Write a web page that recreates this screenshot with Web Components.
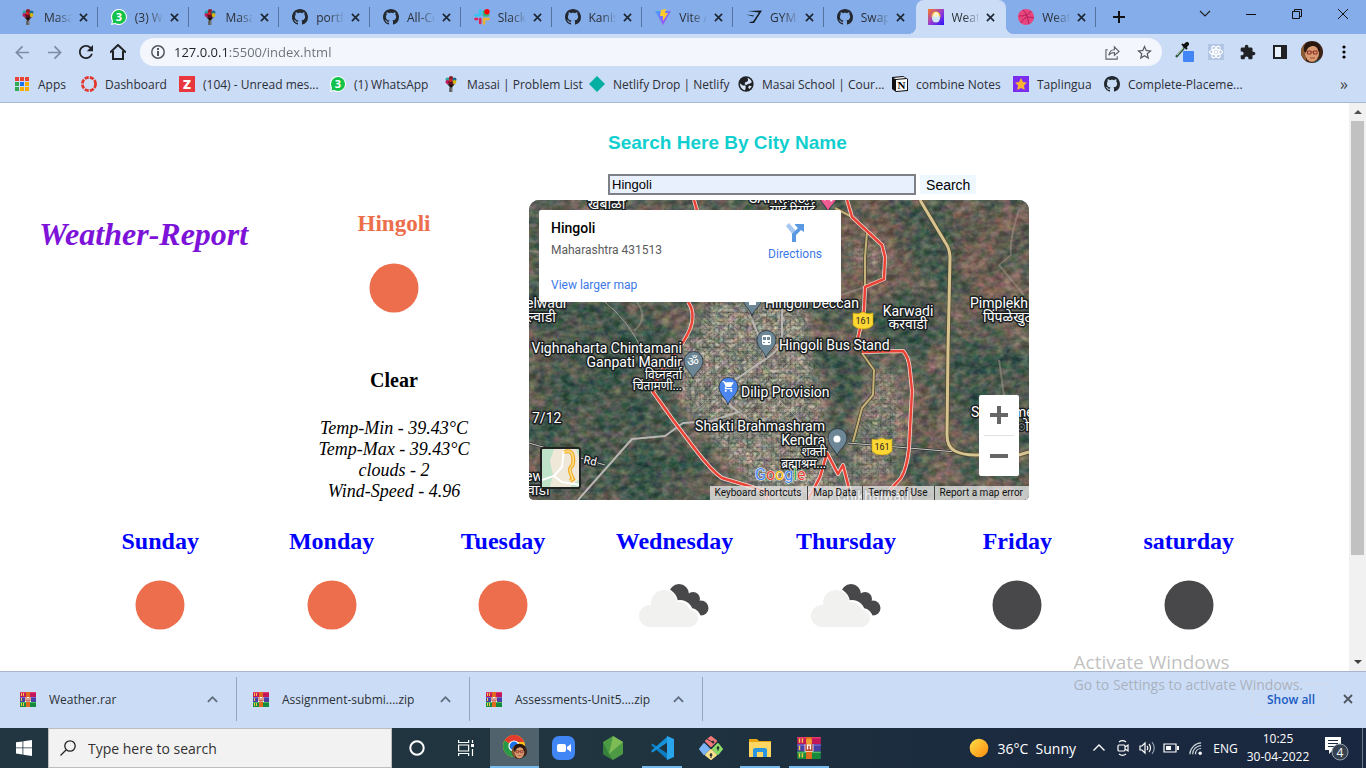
<!DOCTYPE html>
<html lang="en">
<head>
<meta charset="utf-8">
<title>Weather Report</title>
<style>
html,body{margin:0;height:100%}
body{font-family:"Open Sans","Noto Sans",sans-serif;font-size:12px;color:#2b2f36;background:#fff;overflow:hidden}
</style>
</head>
<body>
<desktop-shell></desktop-shell>
<script>
const GH='<path fill="#24292f" d="M8 0C3.58 0 0 3.58 0 8c0 3.54 2.29 6.53 5.47 7.59.4.07.55-.17.55-.38 0-.19-.01-.82-.01-1.49-2.01.37-2.53-.49-2.69-.94-.09-.23-.48-.94-.82-1.13-.28-.15-.68-.52-.01-.53.63-.01 1.08.58 1.23.82.72 1.21 1.87.87 2.33.66.07-.52.28-.87.51-1.07-1.78-.2-3.64-.89-3.64-3.95 0-.87.31-1.59.82-2.15-.08-.2-.36-1.02.08-2.12 0 0 .67-.21 2.2.82.64-.18 1.32-.27 2-.27.68 0 1.36.09 2 .27 1.53-1.04 2.2-.82 2.2-.82.44 1.1.16 1.92.08 2.12.51.56.82 1.27.82 2.15 0 3.07-1.87 3.75-3.65 3.95.29.25.54.73.54 1.48 0 1.07-.01 1.93-.01 2.2 0 .21.15.46.55.38A8.013 8.013 0 0016 8c0-4.42-3.58-8-8-8z"/>';
const FACE='<clipPath id="f"><circle cx="12" cy="12" r="11"/></clipPath><g clip-path="url(#f)"><path fill="#3d2417" d="M0 0h24v24H0z"/><path fill="#8a5a33" d="M0 0h6v24H0z"/><ellipse cx="12" cy="13" rx="7" ry="9" fill="#d99a72"/><path fill="#2a1710" d="M4 11C3 4 7 1 13 2c6 0 8 4 7 10l-2-1c0-3-2-5-6-5-4 1-5 3-6 7z"/><path fill="none" stroke="#8c2d22" d="M7.500 11h3.500v3H7.500zm6 0H17v3h-3.500zM11 12h2.500"/><path stroke="#a34b3a" d="M10 18h5"/><path fill="#2b86a5" d="M12 24l8-5 4 1v4z"/></g>';
const RAR='<path fill="#c2185b" d="M0 0h16v5H0z"/><path fill="#e5396b" d="M0 0h16v1H0z"/><path fill="#4a3fa5" d="M0 5h16v5H0z"/><path fill="#7468cf" d="M0 5h16v1H0z"/><path fill="#168a3c" d="M0 10h16v5H0z"/><path fill="#4cb85f" d="M0 10h16v1H0z"/><path fill="#f6c945" d="M1 1h1v3H1zM3 1h1v3H3zM1 6h1v3H1zM1 11h1v3H1zM3 11h1v3H3z"/><path fill="#e06b1f" d="M6 0h4v15H6z"/><path fill="#fff" d="M5 5h6v5H5z"/><path fill="none" stroke="#b3402a" d="M6 5v4h4V5M8 6v3"/>';
const ICONS={
balloon:['0 0 16 16','<path fill="#777" d="M4 8h8l-2.500 3v5h-3v-5z"/><path stroke="#444" d="M5 8l3 4 3-4M7 12v4"/><circle cx="4.500" cy="3.500" r="2" fill="#2ba8a0"/><circle cx="8" cy="2.300" r="2.200" fill="#8f1d2c"/><circle cx="11.500" cy="3.500" r="2" fill="#1a6b8c"/><circle cx="4.500" cy="6" r="2" fill="#c2185b"/><circle cx="8" cy="6.500" r="2.600" fill="#5c1020"/><circle cx="11.500" cy="6" r="1.900" fill="#d8b400"/><circle cx="7.500" cy="4.500" r="1.500" fill="#d22"/>'],
wa:['0 0 16 16','<path fill="#fff" d="M8 0a8 8 0 1 1-4 15l-4 1 1-4A8 8 0 0 1 8 0z"/><circle cx="8" cy="8" r="7" fill="#12c24a"/><path fill="#12c24a" d="M1.500 14.500l1-5 4 4z"/><text x="8" y="12" text-anchor="middle" font-size="11" font-weight="700" fill="#fff" font-family="Open Sans">3</text>'],
github:['0 0 16 16',GH],
slack:['0 0 16 16','<g stroke-width="2.600" stroke-linecap="round" fill="none"><path stroke="#36c5f0" d="M6.200 1.500v4M1.500 6.200h4"/><path stroke="#2eb67d" d="M10 2.500v3.500M10 6.200h4"/><path stroke="#e01e5a" d="M6.200 10v4M1.500 10h1.500"/><path stroke="#ecb22e" d="M10 10v4.500M10 10h4.500"/></g><circle cx="13" cy="2.700" r="2.700" fill="#f00"/>'],
vite:['0 0 16 16','<defs><linearGradient id="g" x2="1" y2="1"><stop stop-color="#41a5ff"/><stop offset="1" stop-color="#bd34fe"/></linearGradient></defs><path fill="url(#g)" d="M0 2l16 0-8 14z"/><path fill="#ffcb2b" d="M6 1l5-1-1 4h3l-5 8 0-5H5z"/>'],
gym:['0 0 16 16','<path fill="#101820" d="M2 2l14-.5L8 14H3l1.500-1.200 2.500-.2 6-9zM0 5.500l8 1-1 1z"/>'],
weather:['0 0 16 16','<defs><linearGradient id="g" y2="1" x2="1"><stop stop-color="#ff7a1a"/><stop offset=".5" stop-color="#9a3fd0"/><stop offset="1" stop-color="#2a12ff"/></linearGradient></defs><path fill="url(#g)" d="M0 0h16v16H0z"/><circle cx="8" cy="7" r="4.500" fill="#ffb52e"/><ellipse cx="8" cy="9" rx="4" ry="4.500" fill="#cfe8f8"/><circle cx="8" cy="5.500" r="2.500" fill="#fff3c8"/>'],
dribbble:['0 0 16 16','<circle cx="8" cy="8" r="8" fill="#e8457f"/><path fill="none" stroke="#b01e56" d="M5 1c4 4 5 9 6 14M1 7c5 0 10-1 12-5M3 14c3-6 7-7 13-5"/>'],
apps:['0 0 16 16','<path fill="#ea4335" d="M1 1h4v4H1zM6 1h4v4H6zM11 1h4v4h-4z"/><path fill="#34a853" d="M1 6h4v4H1zM1 11h4v4H1z"/><path fill="#1a73e8" d="M6 6h4v4H6z"/><path fill="#fbab00" d="M11 6h4v4h-4zM6 11h4v4H6zM11 11h4v4h-4z"/><path stroke="#cbdcf6" d="M0 5.500h16M0 10.500h16M5.500 0v16M10.500 0v16"/>'],
canvas:['0 0 16 16','<circle cx="8" cy="8" r="6.500" fill="none" stroke="#e4372c" stroke-width="3" stroke-dasharray="4 1.105"/><circle cx="8" cy="8" r="5.200" fill="#cbdcf6"/>'],
zed:['0 0 16 16','<path fill="#e8383d" d="M0 0h16v16H0z"/><text x="8" y="13" text-anchor="middle" font-size="13" font-weight="800" fill="#fff" font-family="Open Sans">Z</text>'],
diamond:['0 0 16 16','<path fill="#05b0a2" d="M8 0l8 8-8 8-8-8z"/>'],
globe:['1 1 22 22','<circle cx="12" cy="12" r="10.500" fill="#202124"/><path fill="#d8e4f8" d="M3.500 11l4 3h4v4l-1 2.500C7 20 3.500 16 3.500 11zM14 3.500c3 1 5 3 6 6l-3 2h-2l-2 2-3-1 1-3 3-1 1-2zM16 14l4 1-3 4-2-2z"/>'],
notion:['0 0 16 16','<path fill="#111" d="M0 1l11-1 5 3v12l-12 1-4-3z"/><path fill="#fff" d="M4 4l11-1v11L4 15zM1 2l10-1 3 1L4 3z"/><text x="9.500" y="13" text-anchor="middle" font-size="11" font-weight="700" fill="#000" font-family="Liberation Serif">N</text>'],
tap:['0 0 16 16','<path fill="#7a2cf0" d="M0 0h16v16H0z"/><path fill="#f9b233" d="M8 2l2 4 4 .5-3 3 .8 4.500L8 12l-3.800 2 .8-4.500-3-3L6 6z"/>'],
x:['0 0 10 10','<path stroke="currentColor" stroke-width="1.800" d="M1 1l8 8M9 1l-8 8"/>'],
xt:['0 0 10 10','<path stroke="#111" d="M0 0l10 10M10 0L0 10"/>'],
plus:['0 0 12 12','<path stroke="#111" stroke-width="2" d="M6 0v12M0 6h12"/>'],
chev:['0 0 12 12','<path fill="none" stroke="#222" stroke-width="1.200" d="M1 3l5 5 5-5"/>'],
up:['0 0 12 12','<path fill="none" stroke="currentColor" stroke-width="2" d="M1 8.500l5-5 5 5"/>'],
upt:['0 0 12 12','<path fill="none" stroke="currentColor" stroke-width="1.400" d="M.5 8.500L6 3l5.500 5.500"/>'],
min:['0 0 10 10','<path stroke="#111" d="M0 5.500h10"/>'],
restore:['0 0 10 10','<path fill="none" stroke="#111" d="M.5 2.500h7v7h-7zM2.500 2V.5h7v7H8"/>'],
back:['0 0 16 16','<path fill="none" stroke="#7d8ba5" stroke-width="1.800" d="M15 8H2M8 1.500L1.500 8 8 14.500"/>'],
fwd:['0 0 16 16','<path fill="none" stroke="#7d8ba5" stroke-width="1.800" d="M1 8h13M8 1.500L14.500 8 8 14.500"/>'],
reload:['4 4 16 16','<path fill="#1f2125" d="M17.650 6.350C16.200 4.900 14.210 4 12 4c-4.420 0-7.990 3.580-7.990 8s3.570 8 7.990 8c3.730 0 6.840-2.550 7.730-6h-2.080c-.82 2.330-3.040 4-5.650 4-3.310 0-6-2.690-6-6s2.690-6 6-6c1.660 0 3.140.69 4.220 1.780L13 11h7V4l-2.350 2.350z"/>'],
home:['0 0 16 16','<path fill="none" stroke="#1f2125" stroke-width="2" d="M0 8.500L8 1l8 7.500M3 7v8h10V7"/>'],
info:['0 0 14 14','<circle cx="7" cy="7" r="6.200" fill="none" stroke="#54585e" stroke-width="1.500"/><path fill="#54585e" d="M6 3h2v2H6zM6 6h2v5H6z"/>'],
share:['0 0 16 16','<path fill="none" stroke="#5f6368" stroke-width="1.200" d="M3 5H1v10h12v-3M4 11c1-5 4-6 6-6V2l5 5-5 4V8c-2 0-4 0-6 3z"/>'],
star:['2 2 20 20','<path fill="#54585e" d="M22 9.240l-7.190-.62L12 2 9.190 8.630 2 9.240l5.460 4.730L5.820 21 12 17.270 18.180 21l-1.630-7.030L22 9.240zM12 15.400l-3.760 2.270 1-4.280-3.320-2.880 4.380-.38L12 6.100l1.710 4.040 4.380.38-3.320 2.880 1 4.280L12 15.400z"/>'],
dropper:['0 0 20 20','<path stroke="#2f5a3e" stroke-width="2.400" d="M2 15l8-9"/><path stroke="#cfe3d8" d="M3 13l6-7"/><path stroke="#111" stroke-width="4" stroke-linecap="round" d="M11 4l2-2"/><path stroke="#111" stroke-width="2" d="M8 2l5 5"/><rect x="9" y="9" width="11" height="11" rx="1" fill="#4285f4"/>'],
react:['0 0 16 16','<path fill="#b3c5e4" d="M0 0h16v16H0z"/><g fill="none" stroke="#fff" stroke-width="1.200"><ellipse cx="8" cy="8" rx="6.500" ry="2.500"/><ellipse cx="8" cy="8" rx="6.500" ry="2.500" transform="rotate(60 8 8)"/><ellipse cx="8" cy="8" rx="6.500" ry="2.500" transform="rotate(120 8 8)"/></g><circle cx="8" cy="8" r="1.500" fill="#fff"/>'],
puzzle:['1 0 23 23','<path fill="#1f2125" d="M20.500 11H19V7c0-1.100-.9-2-2-2h-4V3.500C13 2.120 11.880 1 10.500 1S8 2.120 8 3.500V5H4c-1.100 0-1.990.9-1.990 2v3.800H3.500c1.490 0 2.700 1.210 2.700 2.700s-1.210 2.700-2.700 2.700H2V20c0 1.100.9 2 2 2h3.800v-1.500c0-1.490 1.210-2.700 2.700-2.700 1.490 0 2.700 1.210 2.700 2.700V22H17c1.100 0 2-.9 2-2v-4h1.500c1.380 0 2.500-1.120 2.500-2.500S21.880 11 20.500 11z"/>'],
panel:['0 0 14 14','<path fill="#1f2125" d="M0 0h14v14H0z"/><path fill="#e8f0fc" d="M2 2h6v10H2z"/>'],
face:['0 0 24 24',FACE],
dots:['0 0 4 16','<circle cx="2" cy="3" r="1.600"/><circle cx="2" cy="8" r="1.600"/><circle cx="2" cy="13" r="1.600"/>'],
rar:['0 0 16 15',RAR],
sunny:['0 0 100 100','<circle cx="50" cy="50" r="24.500" fill="#ec6e4c"/>'],
dark:['0 0 100 100','<circle cx="50" cy="50" r="24.500" fill="#48484a"/>'],
cloud:['0 0 100 100','<g fill="#48484a"><circle cx="55" cy="39" r="10"/><circle cx="69" cy="44" r="7"/><circle cx="77" cy="53" r="7.500"/><path d="M55 46l15-6 6 20-12-4z"/></g><g fill="#fff"><circle cx="39" cy="48" r="15"/><circle cx="56" cy="58" r="13"/><circle cx="66" cy="64" r="11"/></g><g fill="#f1f1ef"><circle cx="26" cy="61" r="11"/><circle cx="40" cy="48" r="13"/><circle cx="55" cy="58" r="11"/><circle cx="65" cy="63" r="9"/><path d="M26 57h39v15H26z"/></g>'],
win:['0 0 16 16','<path fill="#fff" d="M0 2.300L6.500 1.400v6.100H0zM7.300 1.300L16 0v7.500H7.300zM0 8.300h6.500v6.200L0 13.600zM7.300 8.300H16V16l-8.700-1.300z"/>'],
mag:['0 0 16 16','<circle cx="10" cy="6" r="5.200" fill="none" stroke="#222" stroke-width="1.300"/><path stroke="#222" stroke-width="1.300" d="M6 10l-5.500 5.500"/>'],
cortana:['0 0 16 16','<circle cx="8" cy="8" r="6.700" fill="none" stroke="#fff" stroke-width="2"/>'],
tasks:['0 0 16 16','<path fill="none" stroke="#fff" stroke-width="1.200" d="M.6 0v2.500h10V0M.6 5h10v6H.6zM.6 16v-2.500h10V16M14.500 0v3M14.500 9v7"/><path fill="#fff" d="M13 4h3v3h-3z"/>'],
chrome:['0 0 26 26','<circle cx="12" cy="12" r="11" fill="#fbc116"/><path fill="#e33b2e" d="M12 12L2.500 6.500a11 11 0 0 1 19 0L22 8H12z"/><path fill="#279847" d="M2.500 6.500A11 11 0 0 0 12 23l4-8z"/><circle cx="12" cy="12" r="5.600" fill="#fff"/><circle cx="12" cy="12" r="4.400" fill="#1a73e8"/><g transform="translate(9 9) scale(.7)">'+FACE+'</g>'],
zoomus:['0 0 24 24','<rect width="23" height="24" x="0" rx="7" fill="#4087f5"/><rect x="5" y="8" width="9" height="8" rx="2" fill="#fff"/><path fill="#fff" d="M15 11l4-3v8l-4-3z"/>'],
node:['0 0 24 24','<path fill="#4d9a45" d="M12 0l10 6v12l-10 6-10-6V6z"/><path fill="#7dbb56" d="M12 0l10 6-14 12z"/><path fill="#37803b" d="M2 6l6 12 4 6-10-6z"/>'],
vscode:['0 0 24 24','<path fill="#0c7dc3" d="M18 24L1 9l1.500-1.500L18 18z"/><path fill="#1591da" d="M18 0L1 15l1.500 1.500L18 6z"/><path fill="#28a5ec" d="M17 0l7 3v18l-7 3z"/>'],
git:['0 0 24 24','<g stroke-linejoin="round" stroke-width="2"><path fill="#f3787a" stroke="#f3787a" d="M12 1l5 4-5 5-5-5z"/><path fill="#7cb4f8" stroke="#7cb4f8" d="M5 8l5 5-5 5-4-5z"/><path fill="#8bdc67" stroke="#8bdc67" d="M19 8l4 5-4 5-5-5z"/><path fill="#f7e08a" stroke="#f7e08a" d="M12 14l5 5-5 4-5-4z"/></g><g stroke="#2b3036" fill="#2b3036"><path d="M8 3l7 4M12 17v5M19 10v5"/><circle cx="14" cy="6" r="1"/><circle cx="12" cy="19" r="1"/><circle cx="19" cy="12" r="1"/></g>'],
folder:['0 0 24 24','<path fill="#e7a60f" d="M1 3h8l2 2h12v4H1z"/><path fill="#ffd664" d="M1 6h22v15H1z"/><path fill="#2c95df" d="M5 21v-8l2-1h10l2 1v8h-4v-5H9v5z"/>'],
rarbig:['0 0 16 15',RAR+'<circle cx="8" cy="3" r="2" fill="#f0a02c"/>'],
sun:['0 0 20 20','<defs><linearGradient id="g" x2="1" y2="1"><stop stop-color="#ffe04a"/><stop offset="1" stop-color="#ff8a0c"/></linearGradient></defs><circle cx="10" cy="10" r="9.300" fill="url(#g)"/>'],
meet:['0 0 16 16','<g fill="none" stroke="#fff" stroke-width="1.200"><rect x="3" y="5" width="7" height="6" rx="1"/><path d="M10 7l3-2v6l-3-2M4 2c2-1.500 5-1.500 7 0M4 14c2 1.500 5 1.500 7 0"/></g>'],
vol:['0 0 16 16','<g fill="none" stroke="#fff" stroke-width="1.200"><path d="M1 6h2l3-3v10l-3-3H1zM8 6c1 1 1 3 0 4M10 4c2 2 2 6 0 8"/><path stroke="#93a3ae" d="M13 2c3 4 3 8 0 12"/></g>'],
batt:['0 0 16 16','<path fill="none" stroke="#fff" stroke-width="1.200" d="M1 4h12v8H1z"/><path fill="#fff" d="M3 6h5v4H3zM14 6h2v4h-2z"/>'],
wifi:['0 0 16 16','<g fill="none" stroke="#cfd6db" stroke-width="1.300"><path d="M2 14C2 8 8 2 14 2M5 14c0-5 4-9 9-9M8 14c0-4 3-6 6-6"/></g><circle cx="13" cy="13" r="1.800" fill="#fff"/>'],
note:['0 0 30 28','<path fill="#fff" d="M2 3h16v13h-8l-4 4v-4H2z"/><path stroke="#1c2b3e" d="M5 6.500h10M5 9.500h10M5 12.500h7"/><circle cx="17" cy="18" r="8" fill="#36424f" stroke="#93a0aa"/><text x="17" y="23" text-anchor="middle" font-size="12" fill="#fff" font-family="Open Sans">4</text>'],
tri:['0 0 8 4','<path fill="#505050" d="M0 4l4-4 4 4z"/>'],
trid:['0 0 8 4','<path fill="#404040" d="M0 0l4 4 4-4z"/>'],
dir:['0 0 20 20','<path fill="#a6c8f2" d="M1 3l3-3 7 8-3 4z"/><path fill="#5899e2" d="M7 19v-8l6-6-3-3V1h9v8l-3-2-5 5v7z"/>'],
};
function define(tag,html){
  customElements.define(tag,class extends HTMLElement{
    connectedCallback(){
      if(this.shadowRoot)return;
      const root=this.attachShadow({mode:'open'});
      const t=document.createElement('template');
      t.innerHTML='<style>*{box-sizing:border-box}button{font:inherit;color:inherit;border:0;background:none;padding:0;margin:0}a{color:inherit;text-decoration:none}</style>'+(typeof html==='function'?html(this):html);
      root.append(t.content.cloneNode(true));
    }
  });
}
/* <ui-icon name size h> draws one glyph from the set */
define('ui-icon',el=>{
  const [box,body]=ICONS[el.getAttribute('name')],s=el.getAttribute('size')||16,h=el.getAttribute('h')||s;
  return `<style>:host{display:inline-flex;flex:none}svg{display:block}text{line-height:1}</style><svg width="${s}" height="${h}" viewBox="${box}" aria-hidden="true">${body}</svg>`;
});
const ic=(n,s,h)=>`<ui-icon name="${n}" size="${s||16}"${h?` h="${h}"`:''}></ui-icon>`;

define('browser-tab',el=>`<style>
:host{display:flex;flex:1 1 0;min-width:0;height:34px;align-items:center;padding:0 10px 0 12px;gap:8px;position:relative;border-right:1px solid transparent;background:linear-gradient(#52749f,#52749f) right center/1px 20px no-repeat}
:host([plain]){background:none}
:host([active]){background:#cbdcf6;border-radius:8px 8px 0 0}
:host([active])::before,:host([active])::after{content:"";position:absolute;bottom:0;width:8px;height:8px}
:host([active])::before{left:-8px;background:radial-gradient(circle at 0 0,transparent 8px,#cbdcf6 8px)}
:host([active])::after{right:-9px;background:radial-gradient(circle at 100% 0,transparent 8px,#cbdcf6 8px)}
.t{flex:1;min-width:0;overflow:hidden;white-space:nowrap;text-align:left;mask-image:linear-gradient(90deg,#000 12px,transparent 29px)}
.c{display:flex;color:#1d2733}
</style>${ic(el.getAttribute('icon'))}<button class="t"><slot></slot></button><button class="c" aria-label="Close tab">${ic('x',9)}</button>`);

const tabs=[['balloon','Masai'],['wa','(3) W'],['balloon','Masai'],['github','portf'],['github','All-Co'],['slack','Slack'],['github','Kanis'],['vite','Vite A'],['gym','GYM'],['github','Swap','plain'],['weather','Weat','active'],['dribbble','Weat']];
define('tab-strip',()=>`<style>
:host{display:flex;background:#85ade9;padding-left:8px;height:34px}
.tabs{display:flex;flex:1;min-width:0}
.add{width:44px;display:grid;place-items:center}
.win{display:flex;margin-left:41px;height:28px}
.win button{width:46px;display:grid;place-items:center}
</style><div class="tabs">${tabs.map(t=>`<browser-tab icon="${t[0]}" ${t[2]||''}>${t[1]}</browser-tab>`).join('')}</div>
<button class="add" aria-label="New tab">${ic('plus',12)}</button>
<div class="win"><button aria-label="Search tabs">${ic('chev',12)}</button><button aria-label="Minimise">${ic('min',10)}</button><button aria-label="Restore">${ic('restore',10)}</button><button aria-label="Close">${ic('xt',10)}</button></div>`);

define('tool-bar',`<style>
:host{display:flex;align-items:center;height:36px;padding:0 6px;background:#cbdcf6}
button{width:32px;height:32px;display:grid;place-items:center;flex:none}
.box{flex:1;display:flex;align-items:center;height:28px;margin:0 6px;border-radius:14px;background:#f3f7fd;padding:0 2px 0 11px}
input{flex:1;min-width:0;border:0;outline:0;padding:0;margin-left:9px;font:13px "Open Sans",sans-serif;color:transparent;background:linear-gradient(90deg,#202124 55px,#6a6f76 55px);-webkit-background-clip:text;background-clip:text}
</style>
<button aria-label="Back">${ic('back',15)}</button><button aria-label="Forward">${ic('fwd',15)}</button><button aria-label="Reload">${ic('reload',14)}</button><button aria-label="Home">${ic('home',16)}</button>
<div class="box">${ic('info',14)}<input aria-label="Address" value="127.0.0.1:5500/index.html"><button aria-label="Share">${ic('share',15)}</button><button aria-label="Bookmark">${ic('star',15)}</button></div>
<button aria-label="Color picker">${ic('dropper',20)}</button><button aria-label="React tools">${ic('react',16)}</button><button aria-label="Extensions">${ic('puzzle',16)}</button><button aria-label="Side panel">${ic('panel',14)}</button><button aria-label="Profile">${ic('face',24)}</button><button aria-label="Menu">${ic('dots',4,16)}</button>`);

const marks=[['apps','Apps'],['canvas','Dashboard'],['zed','(104) - Unread mes...'],['wa','(1) WhatsApp'],['balloon','Masai | Problem List'],['diamond','Netlify Drop | Netlify'],['globe','Masai School | Cour...'],['notion','combine Notes'],['tap','Taplingua'],['github','Complete-Placeme...']];
define('bookmark-bar',()=>`<style>
:host{display:grid;grid-template-columns:67px 98px 151px 113px 146px 149px 154px 121px 91px 1fr auto;align-items:center;height:33px;padding:0 18px 4px 14px;background:#cbdcf6;border-bottom:1px solid #a9b8d3}
a{display:flex;align-items:center;gap:8px;white-space:nowrap;min-width:0}
.more{font-size:16px;color:#444}
</style>${marks.map(m=>`<a href="#">${ic(m[0])}${m[1]}</a>`).join('')}<button class="more" aria-label="More bookmarks">»</button>`);

define('search-form',`<style>
:host{display:block;padding:29px 0 5px 45%;margin-left:1px;font-family:"Liberation Sans",sans-serif}
h3{margin:0 0 20px;font-size:19px;line-height:22px;color:#12cfcf}
form{display:flex;gap:4px;height:21px;align-items:center}
input{width:308px;height:21px;border:2px solid #7d8085;background:#e8f0fe;padding:1px 2px;font:13px "Liberation Sans",sans-serif;color:#000;border-radius:0}
button{height:19px;padding:0 6px;background:#f0f8ff;font-size:14px;color:#000}
</style><h3><label for="q">Search Here By City Name</label></h3><form onsubmit="return false"><input id="q" value="Hingoli"><button>Search</button></form>`);

define('current-weather',`<style>
:host{display:block;width:152px;text-align:center;padding-top:10px;color:#000}
h2{margin:0;font-size:23px;line-height:28px;color:#ec6e4c}
ui-icon{display:flex;justify-content:center}
h3{margin:31px 0 27px;font-size:20px;line-height:22px}
p{margin:0;font-style:italic;font-size:18px;line-height:21px;white-space:nowrap}
</style><h2>Hingoli</h2>${ic('sunny',100)}<h3>Clear</h3><p>Temp-Min - 39.43°C</p><p>Temp-Max - 39.43°C</p><p>clouds - 2</p><p>Wind-Speed - 4.96</p>`);

const pin=(x,y,c,g)=>`<g transform="translate(${x} ${y})"><path fill="${c}" stroke="#26313a" stroke-width=".8" d="M0 0c-1-6-9-10-9-18a9.500 9.500 0 0 1 19 0c0 8-9 12-10 18z"/>${g}</g>`;
const roads={
red:'M165 0l4 14M159 102q6 8 4 20t-18 33-18 25l-3 12 20 28 25 33q14 18 24 25l30 9 15 5v8M318 0l5 17 30 28 3 12-1 22-19 8-1 23-6 28M333 152l41-1q6 6 7 20l2 20-3 57q-2 20-8 30l-11 12M279 300l12-23 7-24 11 21 5-9 7 27',
gold:'M391 0l25 42q5 7 5 16l-2 92-1 85q0 12 8 16t20 4h44l10-3',
thin:'M306 8l17 9 15 15-2 25v30M333 153l12 17-1 25-11 13-9 34',
grey:'M49 300l54-61 33-3 18-13 29-2 26-9-16-14M203 182l35-24M238 158q14-8 15-24l0-30M223 120l15 36',
lane:'M199 205l24 16 34 20M172 206l30-28M240 190l40 40 28 14M60 90q30 20 45 45l30 55'};
define('map-view',()=>`<style>
:host{display:block;position:relative;width:500px;height:300px;border-radius:10px 10px 5px 5px;overflow:hidden;background:#4a5a4c;font-family:Roboto,sans-serif;flex:none}
svg.m{display:block}
.card{position:absolute;left:10px;top:10px;width:302px;height:92px;background:#fff;padding:9px 12px;display:flex;justify-content:space-between;border-radius:2px;color:#5b5b5b;line-height:16px}
.card b{display:block;font-weight:500;font-size:14px;line-height:18px;color:#000;margin-bottom:5px}
.card a{color:#3b78e7}
.card p{margin:0 0 19px}
.d{display:flex;flex-direction:column;align-items:center;padding:4px 7px 0 0;gap:3px}
.z{position:absolute;right:10px;top:195px;width:40px;height:81px;background:#fff;border-radius:2px;display:flex;flex-direction:column;align-items:center}
.z button{flex:1;width:30px;display:grid;place-items:center}
.z button+button{border-top:1px solid #e0e0e0}
.z i{grid-area:1/1;width:18px;height:4px;background:#666}
.z i+i{width:4px;height:18px}
.th{position:absolute;left:11px;top:247px;width:41px;height:42px;border:2px solid #222;border-radius:3px;overflow:hidden}
.ft{position:absolute;right:0;bottom:0;height:14px;display:flex;background:rgba(235,235,235,.75);font-size:10px;line-height:14px;color:#111}
.ft a{padding:0 6px 0 5px}.ft a+a{border-left:1px solid #444}
</style>
<svg class="m" width="500" height="300" viewBox="0 0 500 300">
<defs>
<filter id="land" x="0" y="0" width="100%" height="100%" color-interpolation-filters="sRGB"><feTurbulence type="fractalNoise" baseFrequency=".03 .04" numOctaves="5" seed="14"/><feColorMatrix values="1 0 0 0 0 1 0 0 0 0 1 0 0 0 0 0 0 0 0 1"/><feComponentTransfer><feFuncR type="table" tableValues=".16 .18 .21 .25 .31 .41 .48 .53 .6 .65"/><feFuncG type="table" tableValues=".24 .28 .31 .34 .37 .38 .4 .44 .48 .52"/><feFuncB type="table" tableValues=".2 .23 .26 .28 .31 .32 .34 .38 .42 .46"/></feComponentTransfer></filter>
<filter id="town" x="0" y="0" width="100%" height="100%" color-interpolation-filters="sRGB"><feTurbulence type="turbulence" baseFrequency=".21 .23" numOctaves="4" seed="5"/><feColorMatrix values=".7 .5 0 0 .24 .7 .4 .1 0 .22 .6 .3 .2 0 .19 0 0 0 0 1"/></filter>
<filter id="grain" x="0" y="0" width="100%" height="100%" color-interpolation-filters="sRGB"><feTurbulence type="fractalNoise" baseFrequency=".12 .16" numOctaves="4" seed="9"/><feColorMatrix values="1.800 0 0 0 -.5 1 .8 0 0 -.5 1 .2 .6 0 -.5 0 0 0 0 .26"/></filter>
<filter id="soft" x="-30%" y="-30%" width="160%" height="160%"><feGaussianBlur stdDeviation="8"/></filter>
<mask id="tm"><g filter="url(#soft)" fill="#ccc"><path d="M180 100l60-5 40 5 0 50 15 40-5 50 30 60H235l-35-40-50-60-15-40 25-20z"/><path fill="#999" d="M345 165l25 5 8 50-15 60-50 10 15-70z"/><ellipse cx="340" cy="58" rx="20" ry="12" fill="#888"/></g></mask>
</defs>
<rect width="500" height="300" filter="url(#land)"/>
<g filter="url(#soft)" opacity=".45"><path fill="#8a5b4d" d="M312 10l60 0 10 60-60 40zM355 195l50 0 0 45-50 0zM430 60l50-10v50l-40 20zM0 165l60 5-10 25-50 0zM400 5l100 10v30l-70 10z"/><path fill="#1f4a3a" d="M20 110l110 10-10 50 40 70 20 60-120 0-50-60zM425 140h75v90h-75zM345 90h60v55h-60zM370 10h60v70h-50zM280 140h35v40h-35z"/></g>
<g mask="url(#tm)"><rect width="500" height="300" filter="url(#town)"/></g>
<rect width="500" height="300" filter="url(#grain)"/>
<g fill="none" stroke-linejoin="round">
<path stroke="#a59a8c" stroke-width="2" opacity=".5" d="M0 51q30 2 80 30t25 50M490 10q-10 30-8 45l-12 10 25 30M470 160l5 35-5 40M336 87l-30 10"/>
<path stroke="#bdb8b0" opacity=".7" d="${roads.lane}"/>
<path stroke="#b9b6b4" stroke-width="2" d="${roads.grey}"/>
<path stroke="#333" stroke-width="2.500" d="M0 243l76 22M319 243l109 9"/><path stroke="#c9c9c4" d="M0 243l76 22M319 243l109 9"/>
<path stroke="#4e4631" stroke-width="3.500" d="${roads.thin}"/><path stroke="#c4b27a" stroke-width="2" d="${roads.thin}"/>
<path stroke="#55492c" stroke-width="4.500" d="${roads.gold}"/><path stroke="#d6c592" stroke-width="3" d="${roads.gold}"/>
<path stroke="#f3dcd8" stroke-width="4" d="${roads.red}"/><path stroke="#ea4335" stroke-width="2.500" d="${roads.red}"/>
</g>
<g fill="#fdd835" stroke="#c9a100" stroke-width=".6"><path d="M324 113q5 2 10-1 5 3 10 1v12q-3 4-10 4t-10-4zM343 239q5 2 10-1 5 3 10 1v12q-3 4-10 4t-10-4z"/></g>
<g font-size="9" fill="#222" text-anchor="middle"><text x="334" y="124">161</text><text x="353" y="250">161</text></g>
${pin(299,12,'#ee5c92','<path stroke="#fff" stroke-width="2" d="M-4-12l9-7M-3-18l7 7"/>')}
${pin(223,116,'#6d8796','<path fill="#fff" d="M-3-14h7v3h-7z"/>')}
${pin(237,158,'#6d8796','<rect x="-4" y="-23" width="9" height="10" rx="2" fill="#fff"/><path fill="#6d8796" d="M-3-21h3v3H-3zM1-21H4v3H1zM-3-16h2v1h-2zM2-16h2v1H2z"/>')}
${pin(164,179,'#6d8796','<text x="0" y="-13" text-anchor="middle" font-size="13" fill="#fff" font-family="Noto Sans,sans-serif">ॐ</text>')}
${pin(199,205,'#4a86ee','<path fill="#fff" transform="translate(-6 -25) scale(.54)" d="M7 18c-1.100 0-1.990.9-1.990 2S5.900 22 7 22s2-.9 2-2-.9-2-2-2zM1 2v2h2l3.600 7.590-1.350 2.450c-.16.28-.25.61-.25.96 0 1.100.9 2 2 2h12v-2H7.420l.68-2h7.450c.75 0 1.410-.41 1.750-1.030L21.600 4H5.210l-.94-2H1zm16 16c-1.100 0-1.990.9-1.990 2s.89 2 1.990 2 2-.9 2-2-.9-2-2-2z"/>')}
${pin(308,256,'#6d8796','<circle cx="0" cy="-17" r="3.500" fill="#fff"/>')}
<g font-size="14" fill="#fff" stroke="#1b1f22" stroke-width="3" paint-order="stroke" stroke-linejoin="round" font-family="Roboto,'Noto Sans',sans-serif">
<text x="59" y="9">खंबाळा</text><text x="220" y="3">SAI Retion</text><text x="286" y="14" font-size="12" text-anchor="end">साई रिसॉर्ट</text>
<text x="-3" y="108">elwadi</text><text x="-2" y="122">ल्वाडी</text>
<text x="236" y="108">Hingoli Deccan</text>
<text x="379" y="116" text-anchor="middle">Karwadi</text><text x="379" y="129" text-anchor="middle">करवाडी</text>
<text x="441" y="108">Pimplekh</text><text x="454" y="122">पिंपळेखुट</text>
<text x="250" y="150">Hingoli Bus Stand</text>
<g text-anchor="end"><text x="153" y="153">Vighnaharta Chintamani</text><text x="153" y="167">Ganpati Mandir</text><text x="153" y="179" font-size="12">विघ्नहर्ता</text><text x="153" y="190" font-size="12">चिंतामणी...</text>
<text x="296" y="231">Shakti Brahmashram</text><text x="296" y="245">Kendra</text><text x="297" y="256" font-size="12">शक्ती</text><text x="297" y="268" font-size="12">ब्रह्माश्रम...</text></g>
<text x="212" y="197">Dilip Provision</text><text x="3" y="223">7/12</text><text x="54" y="263" font-size="11" transform="rotate(12 54 263)">Rd</text>
<text x="-4" y="281">ew</text><text x="-2" y="295">वाडी</text><text x="442" y="217">S</text><text x="485" y="217">me</text><text x="488" y="231">ोड</text><text x="308" y="301">Chikhalwadi</text>
</g>
<text x="226" y="280" font-size="16" stroke="#fff" stroke-width="1" paint-order="stroke"><tspan fill="#4285f4">G</tspan><tspan fill="#ea4335">o</tspan><tspan fill="#fbbc05">o</tspan><tspan fill="#4285f4">g</tspan><tspan fill="#34a853">l</tspan><tspan fill="#ea4335">e</tspan></text>
</svg>
<div class="card"><div><b>Hingoli</b><p>Maharashtra 431513</p><a href="#">View larger map</a></div><a class="d" href="#">${ic('dir',20)}<span>Directions</span></a></div>
<div class="th"><svg width="38" height="38"><path fill="#bfe3c8" d="M0 0h38v38H0z"/><path fill="#efe8d8" d="M12 0h22l4 12v18L28 38H8l3-12-3-14z"/><path fill="none" stroke="#fff" stroke-width="2" d="M22 0l-2 18-8 9-12 4M12 27l8 6 18 3"/><path fill="none" stroke="#f3ad2c" stroke-width="4" d="M22 3q8-3 9 5t-2 10 2 12l-3 2"/><path fill="none" stroke="#ffe28a" stroke-width="1.500" d="M22 3q8-3 9 5t-2 10 2 12l-3 2"/></svg></div>
<div class="z"><button aria-label="Zoom in"><i></i><i></i></button><button aria-label="Zoom out"><i></i></button></div>
<div class="ft"><a href="#">Keyboard shortcuts</a><a href="#">Map Data</a><a href="#">Terms of Use</a><a href="#">Report a map error</a></div>`);

define('day-card',el=>`<style>
:host{display:flex;flex-direction:column;align-items:center;flex:1}
h2{margin:0;font-size:24px;line-height:28px;color:#00f}
</style><h2><slot></slot></h2>${ic(el.getAttribute('sky'),100)}`);

define('weather-page',`<style>
:host{display:flex;flex:1;min-height:0;background:#fff;font-family:"Liberation Serif",serif}
main{flex:1;min-width:0;overflow:hidden}
.row{display:flex;align-items:flex-start;padding-left:39px}
h1{margin:15px 70px 0 0;width:209px;font-size:32px;line-height:38px;font-style:italic;color:#7d12d9;white-space:nowrap}
map-view{margin-left:59px}
.week{display:flex;max-width:1200px;margin:25px auto 0}
.sb{width:17px;background:#f1f1f1;display:flex;flex-direction:column;align-items:center;padding:7px 0}
.th{flex:0 1 434px;width:13px;background:#c1c1c1;margin:7px 0 auto}
</style><main><search-form></search-form>
<div class="row"><h1>Weather-Report</h1><current-weather></current-weather><map-view></map-view></div>
<div class="week"><day-card sky="sunny">Sunday</day-card><day-card sky="sunny">Monday</day-card><day-card sky="sunny">Tuesday</day-card><day-card sky="cloud">Wednesday</day-card><day-card sky="cloud">Thursday</day-card><day-card sky="dark">Friday</day-card><day-card sky="dark">saturday</day-card></div></main>
<div class="sb">${ic('tri',8,4)}<div class="th"></div>${ic('trid',8,4)}</div>`);

define('download-item',`<style>
:host{display:flex;align-items:center;width:233px;height:44px;padding:0 18px 0 16px;border-right:1px solid #97a6c0;color:#2b3037}
a{flex:1;margin-left:13px}button{display:flex;color:#5f6a7c}
</style>${ic('rar',16,15)}<a href="#"><slot></slot></a><button aria-label="More options">${ic('up',11)}</button>`);
define('download-bar',`<style>
:host{display:flex;align-items:center;height:57px;flex:none;background:#cbdcf6;border-top:1px solid #a9b5cc;padding:0 13px 2px 4px}
.all{margin-left:auto;width:78px;height:32px;border:1px solid #d3dbe9;border-radius:4px;color:#1a5bc4;font-weight:600}
.x{display:flex;margin-left:13px;color:#50565f}
</style><download-item>Weather.rar</download-item><download-item>Assignment-submi....zip</download-item><download-item>Assessments-Unit5....zip</download-item><button class="all">Show all</button><button class="x" aria-label="Close">${ic('x',10)}</button>`);

define('task-bar',`<style>
:host{display:flex;height:40px;flex:none;background:linear-gradient(90deg,#213640,#20343f 45%,#1b2a3f 75%,#1a2740);color:#fff}
button{display:grid;place-items:center;flex:none}
.s{width:48px}
.q{width:344px;display:flex;align-items:center;background:#f2f2f2;border:1px solid #bdbdbd;padding-left:11px;gap:12px}
.q input{border:0;background:none;outline:0;padding:0;flex:1;min-width:0;font:14px "Open Sans",sans-serif}
.q input::placeholder{color:#333;opacity:1}
.a{width:49px;height:40px}
.on{background:#50636d;border-bottom:2px solid #76b9ed}
.run{background:linear-gradient(#76b9ed,#76b9ed) center bottom/40px 2px no-repeat}
.tray{margin-left:auto;display:flex;align-items:center}
.w{display:flex;align-items:center;gap:8px;font-size:14px;margin-right:11px;white-space:pre}
.i{width:24px;height:40px}
.e{width:37px}
.c{width:68px;line-height:18px;text-align:center}
.n{width:40px;margin-left:6px}
.end{width:8px;height:40px;background:linear-gradient(#6b7885,#6b7885) 4px 0/1px 40px no-repeat}
</style><button class="s" aria-label="Start">${ic('win',16)}</button><label class="q">${ic('mag',16)}<input placeholder="Type here to search" aria-label="Search"></label>
<button class="a" aria-label="Cortana">${ic('cortana',16)}</button><button class="a" aria-label="Task view">${ic('tasks',16)}</button><button class="a on" aria-label="Chrome">${ic('chrome',26)}</button><button class="a" aria-label="Zoom">${ic('zoomus',24)}</button><button class="a" aria-label="Node">${ic('node',24)}</button><button class="a run" aria-label="Code">${ic('vscode',24)}</button><button class="a" aria-label="Git">${ic('git',24)}</button><button class="a run" aria-label="Explorer">${ic('folder',24)}</button><button class="a run" aria-label="Archiver">${ic('rarbig',24,22)}</button>
<div class="tray"><button class="w">${ic('sun',20)}<span>36°C  Sunny</span></button><button class="i" aria-label="Hidden icons">${ic('upt',12)}</button><button class="i" aria-label="Camera">${ic('meet',16)}</button><button class="i" aria-label="Volume">${ic('vol',16)}</button><button class="i" aria-label="Battery">${ic('batt',16)}</button><button class="i" aria-label="Network">${ic('wifi',15)}</button><button class="e">ENG</button><button class="c">10:25<br>30-04-2022</button><button class="n" aria-label="Notifications">${ic('note',30,28)}</button><span class="end"></span></div>`);

define('activation-note',`<style>
:host{position:absolute;right:63px;bottom:73px;color:rgba(140,140,140,.55);pointer-events:none;white-space:nowrap}
p{margin:0;font-size:19px;line-height:24px}p+p{font-size:14px;line-height:21px}
</style><p>Activate Windows</p><p>Go to Settings to activate Windows.</p>`);

define('desktop-shell',`<style>:host{display:flex;flex-direction:column;height:100vh;position:relative}</style>
<tab-strip></tab-strip><tool-bar></tool-bar><bookmark-bar></bookmark-bar><weather-page></weather-page><download-bar></download-bar><task-bar></task-bar><activation-note></activation-note>`);
</script>
</body>
</html>
